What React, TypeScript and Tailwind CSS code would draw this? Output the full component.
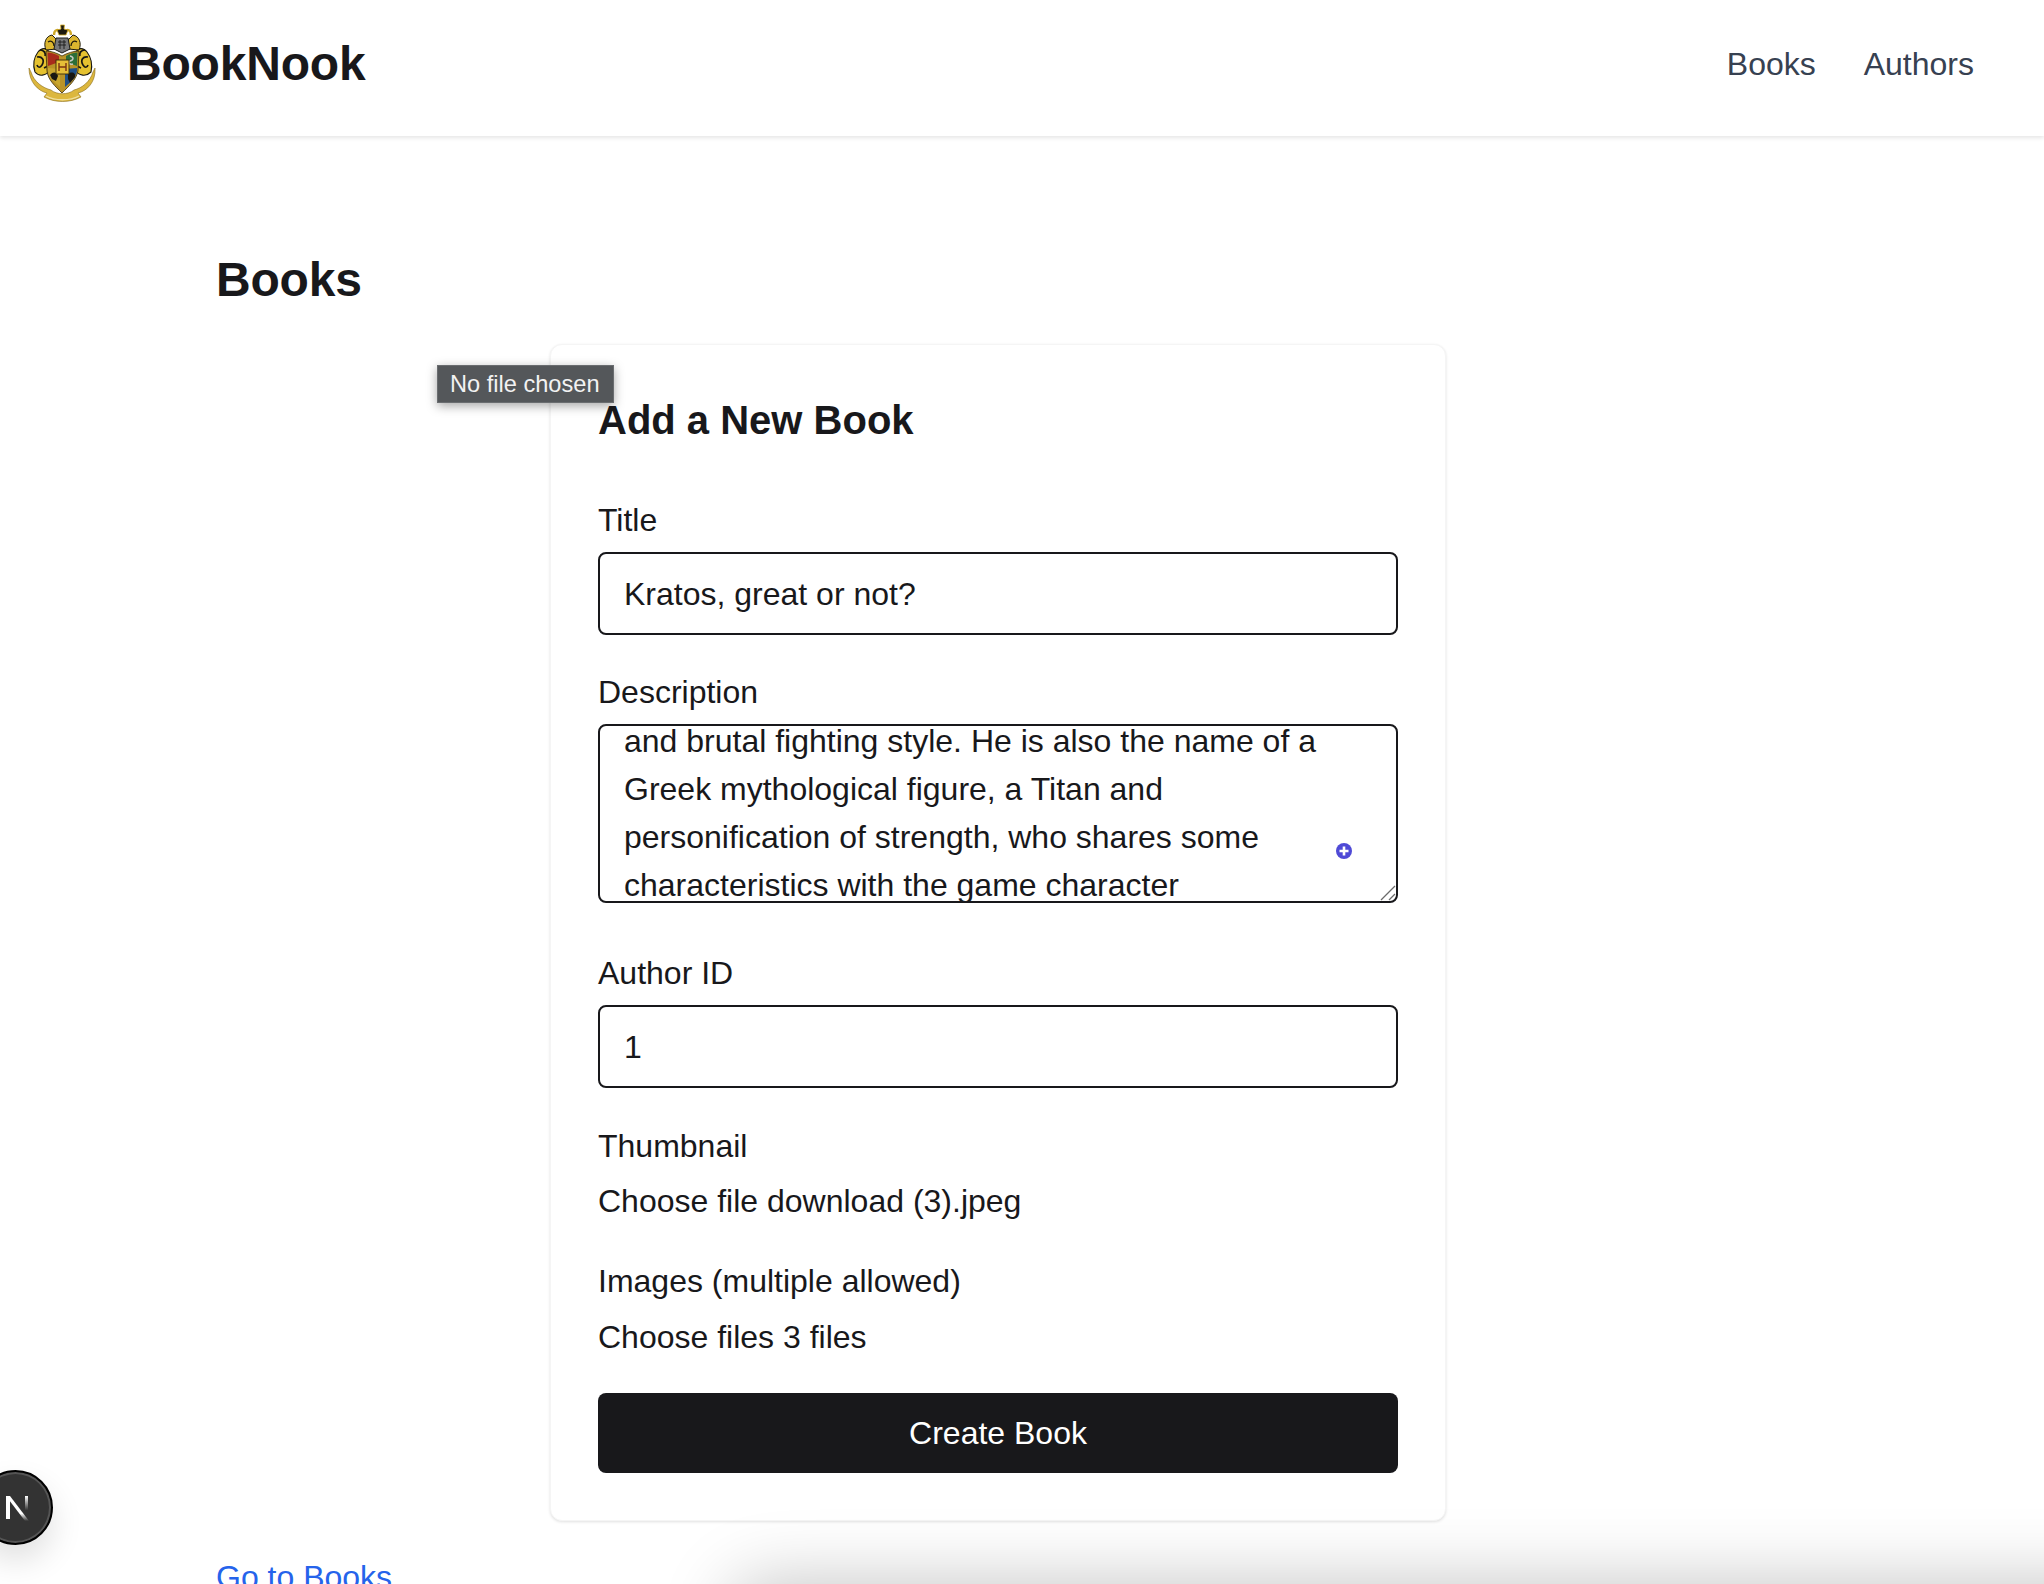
import { ReactNode } from 'react';

function Crest() {
  return (
    <svg viewBox="24 24 80 80" className="w-20 h-20 shrink-0">
      {/* ribbon */}
      <path d="M29 68 C29 82 38 91 47 93 L44 97 C55 103 70 103 81 97 L78 93 C87 91 96 82 95 68 L93 72 C90 82 82 88 74 90 C68 95 57 95 51 90 C43 88 34 82 31 72 Z" fill="#dcb73e" stroke="#8a6d1c" strokeWidth="0.6" />
      <path d="M46 96 C55 101 70 101 79 96" fill="none" stroke="#efdf9f" strokeWidth="1.4" />
      {/* lions */}
      <path d="M35 72 C32 63 35 56 38 52 C42 47 47 48 49 52 L50 70 C46 76 39 77 35 72 Z" fill="#e5c230" stroke="#191813" strokeWidth="1.1" />
      <path d="M91 72 C93 63 90 56 87 52 C83 47 78 48 76 52 L75 70 C79 76 86 77 91 72 Z" fill="#e5c230" stroke="#191813" strokeWidth="1.1" />
      <path d="M37 57 C42 56 45 60 42 65 C40 68 38 68 37 65 M40 50 C44 50 46 53 45 56 M88 57 C83 56 80 60 83 65 C85 68 87 68 88 65 M85 50 C81 50 79 53 80 56 M44 68 L48 66 M81 68 L77 66" fill="none" stroke="#191813" strokeWidth="1.7" />
      {/* mantling */}
      <path d="M46 50 C43 43 46 36 52 35 L58 41 L57 49 Z" fill="#dcb62f" stroke="#211c0d" strokeWidth="1" />
      <path d="M79 50 C82 43 79 36 73 35 L67 41 L68 49 Z" fill="#dcb62f" stroke="#211c0d" strokeWidth="1" />
      <path d="M48 42 C51 40 54 42 54 46 M77 42 C74 40 71 42 71 46" fill="none" stroke="#211c0d" strokeWidth="1.3" />
      <path d="M54 35 C54 30 58 28 60 33 M71 35 C71 30 67 28 65 33" fill="none" stroke="#cfa827" strokeWidth="2.4" />
      {/* crown */}
      <path d="M60.5 25 L64.5 25 L64 29 L68 30 L66 35 L59 35 L57 30 L61 29 Z" fill="#1d1a10" stroke="#d8b02c" strokeWidth="0.8" />
      {/* helm */}
      <path d="M56 38 L68 38 L70 49 L62 53 L54 49 Z" fill="#77787a" stroke="#1c1c1c" strokeWidth="1" />
      <path d="M58 42 L66 42 M58 45 L66 45 M60 40 L60 49 M64 40 L64 49" stroke="#1c1c1c" strokeWidth="0.9" />
      {/* shield */}
      <path d="M46 51 C51 51 57 53 62 56 C67 53 74 51 79 51 L78 71 C76 80 69 86 62 93 C55 86 48 80 47 71 Z" fill="#b99327" stroke="#3b2d0b" strokeWidth="0.8" />
      <path d="M47.5 52.5 C51 52.5 55 54 59 56 L59 62 L48 66 Z" fill="#a82c1c" />
      <path d="M77.5 52.5 C74 52.5 70 54 66 56 L66 62 L77 66 Z" fill="#2c6e38" />
      <path d="M48 68 L60 69 L60 87 C54 82 49 77 48 71 Z" fill="#c9a72f" />
      <path d="M77 68 L65 69 L65 87 C71 82 76 77 77 71 Z" fill="#1f4f85" />
      <path d="M50 75 C53 71 57 72 58 76 L56 81 L52 79 Z" fill="#191813" />
      <path d="M68 74 C72 71 76 73 75 77 L70 83 L68 79 Z" fill="#191813" />
      <path d="M70 56 C74 57 74 60 70 61 C68 62 69 65 73 64" fill="none" stroke="#c8c9c5" strokeWidth="1.4" />
      <rect x="56" y="60" width="13" height="14" fill="#e6bf38" stroke="#3a2c0a" strokeWidth="0.9" />
      <path d="M59 63 L59 71 M66 63 L66 71 M59 67 L66 67" stroke="#7b3412" strokeWidth="1.4" />
    </svg>
  );
}

function Field({ label, children, className }: { label: string; children: ReactNode; className: string }) {
  return (
    <div className={className}>
      <div className="h-12 leading-[48px] mb-2">{label}</div>
      {children}
    </div>
  );
}

function TextBox({ value }: { value: string }) {
  return (
    <div className="h-[83px] border-2 border-[#18181b] rounded-lg px-6 flex items-center">{value}</div>
  );
}

export default function App() {
  return (
    <div className="relative w-[2044px] h-[1584px] overflow-hidden bg-white text-[#18181b] text-[32px] font-['Liberation_Sans',Arial,sans-serif]">
      <nav className="h-[136px] pb-2 pl-6 pr-[70px] flex items-center justify-between bg-white shadow-[0_2px_4px_rgba(0,0,0,0.1)]">
        <div className="flex items-center gap-[23px]">
          <Crest />
          <span className="text-[48px] tracking-[-0.2px] font-bold">BookNook</span>
        </div>
        <div className="flex items-center gap-12 text-[#374151]">
          <a>Books</a>
          <a>Authors</a>
        </div>
      </nav>

      <main className="pl-[216px] pt-[116px]">
        <h1 className="text-[48px] leading-[56px] tracking-[-0.2px] font-bold">Books</h1>

        <div className="ml-[334px] mt-[36px] w-[896px] h-[1177px] px-[47px] pt-[47px] bg-white rounded-xl border border-[#f5f5f5] shadow-[0_1px_3px_rgba(0,0,0,0.12)]">
          <h2 className="text-[40px] leading-[56px] font-bold mb-12">Add a New Book</h2>

          <Field label="Title" className="mb-[33px]">
            <TextBox value="Kratos, great or not?" />
          </Field>

          <Field label="Description" className="mb-[46px]">
            <div className="relative h-[179px] border-2 border-[#18181b] rounded-lg px-6 overflow-hidden leading-[48px]">
              <div className="-mt-[9px]">
                <div>and brutal fighting style. He is also the name of a</div>
                <div>Greek mythological figure, a Titan and</div>
                <div>personification of strength, who shares some</div>
                <div>characteristics with the game character</div>
              </div>
              <svg viewBox="0 0 16 16" className="absolute right-0 bottom-0 w-4 h-4">
                <path d="M1 15 L15 1 M9 15 L15 9" stroke="#6b6b6b" strokeWidth="1.3" />
              </svg>
              <svg viewBox="0 0 16 16" className="absolute left-[736px] top-[117px] w-4 h-4">
                <circle cx="8" cy="8" r="8" fill="#4f4ad6" />
                <path d="M8 3.5 V12.5 M3.5 8 H12.5" stroke="#fff" strokeWidth="2.6" />
              </svg>
            </div>
          </Field>

          <Field label="Author ID" className="mb-[34px]">
            <TextBox value="1" />
          </Field>

          <div className="h-12 leading-[48px] mb-[7px]">Thumbnail</div>
          <div className="h-12 leading-[48px] mb-8">Choose file download (3).jpeg</div>
          <div className="h-12 leading-[48px] mb-2">Images (multiple allowed)</div>
          <div className="h-12 leading-[48px] mb-8">Choose files 3 files</div>

          <button className="w-full h-[80px] rounded-lg bg-[#18181b] text-white">Create Book</button>
        </div>

        <a className="block mt-[32px] leading-[48px] text-[#2563eb]">Go to Books</a>
      </main>

      {/* native title tooltip */}
      <div className="absolute left-[437px] top-[365px] h-[38px] pl-3 pr-[13px] pt-px flex items-center bg-[#54575a] border border-[#6a6d70] text-[#f2f2f2] text-[23.6px] shadow-[0_3px_10px_rgba(0,0,0,0.35)]">
        No file chosen
      </div>

      {/* dev indicator */}
      <div className="absolute left-[-22px] top-[1470px] w-[75px] h-[75px] rounded-full bg-[#333] border-2 border-black shadow-[inset_0_0_0_2px_#555,0_16px_32px_rgba(0,0,0,0.12)] flex items-center justify-center">
        <svg viewBox="0 0 24 26" className="ml-[3px] w-6 h-[26px]">
          <defs>
            <linearGradient id="n-fade" x1="0" y1="0" x2="0" y2="1">
              <stop offset="0" stopColor="#fff" />
              <stop offset="0.7" stopColor="#fff" />
              <stop offset="1" stopColor="#fff" stopOpacity="0" />
            </linearGradient>
            <linearGradient id="n-right" x1="0" y1="0" x2="0" y2="1">
              <stop offset="0" stopColor="#fff" />
              <stop offset="0.75" stopColor="#fff" stopOpacity="0" />
            </linearGradient>
          </defs>
          <path d="M1 1 H5 V24 H1 Z" fill="#fff" />
          <path d="M1 1 H5 L24 26 H20 Z" fill="url(#n-fade)" />
          <path d="M20 1 H23 V20 H20 Z" fill="url(#n-right)" />
        </svg>
      </div>

      {/* shadow of a toast sitting below the fold */}
      <div className="absolute left-[760px] top-[1610px] w-[1400px] h-[200px] rounded-xl shadow-[0_0_70px_30px_rgba(0,0,0,0.22)]" />
    </div>
  );
}
